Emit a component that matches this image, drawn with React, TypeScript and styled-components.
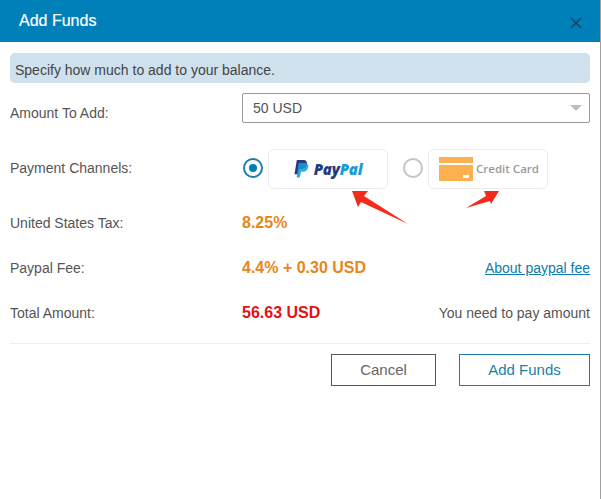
import styled, { createGlobalStyle } from 'styled-components'

const GlobalStyle = createGlobalStyle`
  html, body {
    margin: 0;
    padding: 0;
    background: #fff;
  }
  * {
    box-sizing: border-box;
  }
`

const Dialog = styled.div`
  position: relative;
  width: 601px;
  height: 499px;
  overflow: hidden;
  background: #fff;
  border-right: 1px solid #a0a0a0;
  font-family: "Liberation Sans", Arial, sans-serif;
  font-size: 14px;
  color: #555;
`

const Header = styled.header`
  height: 42px;
  padding: 0 17px 0 19px;
  background: #0080b8;
  display: flex;
  align-items: center;
  justify-content: space-between;
`

const Title = styled.h1`
  margin: 0;
  font-size: 16px;
  font-weight: 400;
  color: #fff;
  -webkit-text-stroke: 0.2px #fff;
`

const Close = styled.svg`
  width: 14px;
  height: 14px;
  margin-top: 3px;
`

const Body = styled.div`
  padding: 11px 10px 0;
`

const Hint = styled.div`
  height: 30px;
  padding: 3px 5px 0;
  margin-bottom: 10px;
  display: flex;
  align-items: center;
  background: #d0e1ee;
  border-radius: 5px;
  color: #444;
`

const Row = styled.div<{ $height: number }>`
  height: ${p => p.$height}px;
  display: grid;
  grid-template-columns: 232px 1fr auto;
  align-items: center;
`

const Label = styled.div`
  color: #555;
`

const Value = styled.div<{ $color: string }>`
  font-size: 16px;
  font-weight: 700;
  color: ${p => p.$color};
`

const Select = styled.div`
  grid-column: 2 / 4;
  height: 30px;
  padding: 0 10px;
  align-self: start;
  display: flex;
  align-items: center;
  justify-content: space-between;
  border: 1px solid #999;
  border-radius: 2px;
  color: #555;
`

const Caret = styled.span`
  width: 0;
  height: 0;
  margin-right: -3px;
  border-left: 6px solid transparent;
  border-right: 6px solid transparent;
  border-top: 6px solid #bdbdbd;
`

const Channels = styled.div`
  grid-column: 2 / 4;
  display: flex;
  align-items: center;
`

const Radio = styled.span<{ $on?: boolean }>`
  width: 20px;
  height: 20px;
  margin: 0 5px 0 1px;
  flex: none;
  display: flex;
  align-items: center;
  justify-content: center;
  border-radius: 50%;
  border: 2px solid ${p => (p.$on ? '#1a7fa8' : '#c4c4c4')};

  &::after {
    content: '';
    display: ${p => (p.$on ? 'block' : 'none')};
    width: 8px;
    height: 8px;
    border-radius: 50%;
    background: #0080b8;
  }
`

const ChannelCard = styled.div<{ $gap?: number; $inset?: number }>`
  width: 120px;
  height: 40px;
  margin-top: 1px;
  margin-right: ${p => p.$gap ?? 0}px;
  padding-left: ${p => p.$inset ?? 0}px;
  display: flex;
  align-items: center;
  justify-content: center;
  border: 1px solid #ececec;
  border-radius: 6px;
  background: #fff;
`

const PayPalWord = styled.span`
  margin-left: 5px;
  font-family: "Open Sans", sans-serif;
  font-size: 15px;
  font-weight: 800;
  font-style: italic;
  letter-spacing: -0.2px;
  color: #253b80;

  b {
    color: #179bd7;
    font-weight: 800;
  }
`

const CardWord = styled.span`
  margin-left: 3px;
  font-family: "Open Sans", sans-serif;
  font-size: 11.5px;
  font-weight: 600;
  color: #9a9a9a;
`

const FeeLink = styled.a`
  color: #0f7ba8;
  text-decoration: underline;
  cursor: pointer;
`

const Note = styled.div`
  color: #555;
`

const Actions = styled.div`
  margin-top: 10px;
  padding-top: 10px;
  border-top: 1px solid #efefef;
  display: flex;
  justify-content: flex-end;
  gap: 23px;
`

const Button = styled.button<{ $width: number; $primary?: boolean }>`
  width: ${p => p.$width}px;
  height: 32px;
  padding: 0 0 2px;
  background: #fff;
  font-family: inherit;
  font-size: 15px;
  color: ${p => (p.$primary ? '#1a7fa8' : '#666')};
  border: 1px solid ${p => (p.$primary ? '#1a7fa8' : '#555')};
`

const Arrows = styled.svg`
  position: absolute;
  left: 0;
  top: 0;
  width: 601px;
  height: 499px;
  pointer-events: none;
`

const App = () => (
  <Dialog>
    <GlobalStyle />
    <Header>
      <Title>Add Funds</Title>
      <Close viewBox="0 0 14 14">
        <path d="M2 2 L12 12 M12 2 L2 12" stroke="#1b3f66" strokeWidth="1.5" fill="none" />
      </Close>
    </Header>
    <Body>
      <Hint>Specify how much to add to your balance.</Hint>
      <Row $height={40}>
        <Label>Amount To Add:</Label>
        <Select>
          50 USD
          <Caret />
        </Select>
      </Row>
      <Row $height={70}>
        <Label>Payment Channels:</Label>
        <Channels>
          <Radio $on />
          <ChannelCard $gap={14}>
            <svg width="15" height="18" viewBox="0 0 16 19">
              <path d="M3 0h6.500C13 0 14.300 2 13.700 4.600 13 8 10.600 9.500 7.500 9.500H5.600L4.500 15H0.500Z" fill="#253b80" />
              <path d="M5 3h6c3.500 0 4.800 2 4.200 4.600-.7 3.300-3 4.900-6 4.900H7.400L6.300 18.500H2.800Z" fill="#179bd7" opacity="0.85" />
            </svg>
            <PayPalWord>
              Pay<b>Pal</b>
            </PayPalWord>
          </ChannelCard>
          <Radio />
          <ChannelCard $inset={2}>
            <svg width="34" height="24" viewBox="0 0 34 24">
              <rect x="0" y="0" width="34" height="6" fill="#fdb04f" />
              <rect x="0" y="8" width="34" height="16" fill="#fdb04f" />
              <rect x="24" y="18" width="6" height="3" fill="#fff" />
            </svg>
            <CardWord>Credit Card</CardWord>
          </ChannelCard>
        </Channels>
      </Row>
      <Row $height={40}>
        <Label>United States Tax:</Label>
        <Value $color="#e8861a">8.25%</Value>
      </Row>
      <Row $height={50}>
        <Label>Paypal Fee:</Label>
        <Value $color="#e8861a">4.4% + 0.30 USD</Value>
        <FeeLink>About paypal fee</FeeLink>
      </Row>
      <Row $height={40}>
        <Label>Total Amount:</Label>
        <Value $color="#e60f14">56.63 USD</Value>
        <Note>You need to pay amount</Note>
      </Row>
      <Actions>
        <Button $width={105}>Cancel</Button>
        <Button $width={131} $primary>
          Add Funds
        </Button>
      </Actions>
    </Body>
    <Arrows viewBox="0 0 601 499">
      <path d="M352 191 L368 191 L364 196 L408 224 L361 202 L358 207 Z" fill="#f5291c" />
      <path d="M499 191 L484 191 L486 196 L466 208 L490 201 L491 204 Z" fill="#f5291c" />
    </Arrows>
  </Dialog>
)

export default App
